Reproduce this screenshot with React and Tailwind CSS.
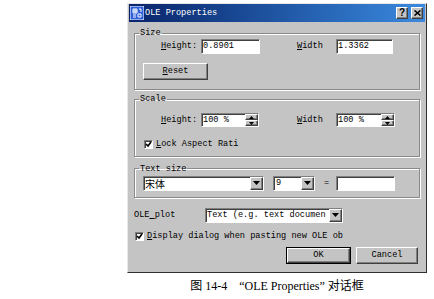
import React from "react";

const sunken =
  "border border-t-[#808080] border-l-[#808080] border-b-white border-r-white shadow-[inset_1px_1px_0_#404040] bg-white";
const raised =
  "border border-t-white border-l-white border-b-[#404040] border-r-[#404040] shadow-[inset_-1px_-1px_0_#808080] bg-[#c4c4c4]";
const group =
  "border border-[#8a8a8a] shadow-[inset_1px_1px_0_#fff,1px_1px_0_#fff] mx-[6px] w-[286px]";

const U = ({ children }) => <span className="underline underline-offset-[1px]">{children}</span>;

const Arrow = () => (
  <div className={`${raised} w-[13px] h-full flex items-center justify-center`}>
    <svg width="7" height="4" viewBox="0 0 7 4">
      <polygon points="0,0 7,0 3.5,4" fill="#000" />
    </svg>
  </div>
);

const Spin = () => (
  <div className="flex flex-col w-[13px] h-full">
    <div className={`${raised} flex-1 flex items-center justify-center`}>
      <svg width="5" height="3" viewBox="0 0 5 3">
        <polygon points="2.5,0 5,3 0,3" fill="#000" />
      </svg>
    </div>
    <div className={`${raised} flex-1 flex items-center justify-center`}>
      <svg width="5" height="3" viewBox="0 0 5 3">
        <polygon points="0,0 5,0 2.5,3" fill="#000" />
      </svg>
    </div>
  </div>
);

const Check = () => (
  <div className={`${sunken} w-[9px] h-[9px] flex items-center justify-center`}>
    <svg width="7" height="7" viewBox="0 0 7 7">
      <polyline points="1,3 3,5 6,1" fill="none" stroke="#000" strokeWidth="1.6" />
    </svg>
  </div>
);

const SpinField = ({ value, w }) => (
  <div className={`${sunken} h-[14px] flex items-stretch`} style={{ width: w }}>
    <span className="flex-1 pl-[1px] leading-[12px]">{value}</span>
    <Spin />
  </div>
);

export default function App() {
  return (
    <div className="w-[434px] h-[299px] bg-white pt-[3px] pl-[127px] font-['Liberation_Mono',monospace] text-[8.6px] text-black">
      <div className="w-[300px] h-[270px] bg-[#c4c4c4] border border-t-[#e8e8e8] border-l-[#e8e8e8] border-b-[#303030] border-r-[#303030] flex flex-col">
        <div className="mx-[1px] h-[18px] bg-gradient-to-r from-[#0a246a] to-[#3b8ae0] flex items-center pl-[1px] pr-[2px]">
          <svg width="14" height="14" viewBox="0 0 14 14">
            <rect x="0" y="0" width="14" height="14" fill="#2c5fd8" stroke="#fff" strokeWidth="1" />
            <path d="M3 3h4v4h-4zM3 5h4M5 3v4M8 8h3v3h-3zM3 9h3M3 11h3M9 3h2v3" fill="none" stroke="#fff" strokeWidth="1" />
          </svg>
          <span className="ml-[1px] text-white leading-[18px]">OLE Properties</span>
          <div className="ml-auto flex gap-[3px]">
            <div className={`${raised} w-[12px] h-[12px] flex items-center justify-center font-bold text-[10px] leading-none font-['Liberation_Sans',sans-serif]`}>?</div>
            <div className={`${raised} w-[12px] h-[12px] flex items-center justify-center`}>
              <svg width="7" height="6" viewBox="0 0 7 6">
                <path d="M0.5 0.5L6.5 5.5M6.5 0.5L0.5 5.5" stroke="#000" strokeWidth="1.6" />
              </svg>
            </div>
          </div>
        </div>

        <fieldset className={`${group} mt-[6px] pb-[9px]`}>
          <legend className="ml-[4px] px-[1px] leading-[10px]">Size</legend>
          <div className="flex items-center mt-[1px] pl-[26px]">
            <span className="w-[40px]"><U>H</U>eight:</span>
            <div className={`${sunken} w-[59px] h-[15px] pl-[1px] leading-[13px]`}>0.8901</div>
            <span className="ml-[37px] w-[39px]"><U>W</U>idth</span>
            <div className={`${sunken} w-[57px] h-[15px] pl-[1px] leading-[13px]`}>1.3362</div>
          </div>
          <div className={`${raised} ml-[8px] mt-[9px] w-[65px] h-[17px] flex items-center justify-center`}>
            <span><U>R</U>eset</span>
          </div>
        </fieldset>

        <fieldset className={`${group} mt-[4px] pb-[5px]`}>
          <legend className="ml-[4px] px-[1px] leading-[10px]">Scale</legend>
          <div className="flex items-center mt-[9px] pl-[26px]">
            <span className="w-[40px]"><U>H</U>eight:</span>
            <SpinField value="100 %" w={58} />
            <span className="ml-[38px] w-[39px]"><U>W</U>idth</span>
            <SpinField value="100 %" w={59} />
          </div>
          <div className="flex items-center mt-[11px] pl-[9px] gap-[3px]">
            <Check />
            <span><U>L</U>ock Aspect Rati</span>
          </div>
        </fieldset>

        <fieldset className={`${group} mt-[7px] pb-[6px]`}>
          <legend className="ml-[4px] px-[1px] leading-[10px]">Text size</legend>
          <div className="flex items-center mt-[2px] pl-[8px]">
            <div className={`${sunken} w-[121px] h-[15px] flex items-stretch`}>
              <span className="flex-1 pl-[1px] leading-[13px] font-['Noto_Sans_CJK_SC',sans-serif] text-[10px]">宋体</span>
              <Arrow />
            </div>
            <div className={`${sunken} ml-[9px] w-[42px] h-[15px] flex items-stretch`}>
              <span className="flex-1 pl-[2px] leading-[13px]">9</span>
              <Arrow />
            </div>
            <span className="ml-[9px] w-[12px]">=</span>
            <div className={`${sunken} w-[59px] h-[15px]`} />
          </div>
        </fieldset>

        <div className="flex items-center mt-[10px] pl-[6px]">
          <span className="w-[71px]">OLE<U> </U>plot</span>
          <div className={`${sunken} w-[138px] h-[15px] flex items-stretch`}>
            <span className="flex-1 pl-[1px] leading-[13px] whitespace-nowrap overflow-hidden">Text (e.g. text documen</span>
            <Arrow />
          </div>
        </div>

        <div className="flex items-center mt-[7px] pl-[7px] gap-[3px]">
          <Check />
          <span><U>D</U>isplay dialog when pasting new OLE ob</span>
        </div>

        <div className="flex justify-end gap-[5px] mt-[4px] pr-[8px]">
          <div className="border border-black w-[65px] h-[17px]">
            <div className={`${raised} w-full h-full flex items-center justify-center`}>OK</div>
          </div>
          <div className={`${raised} w-[62px] h-[17px] flex items-center justify-center`}>Cancel</div>
        </div>
      </div>

      <div className="w-[300px] mt-[4px] flex justify-center items-center text-[12px] font-['Liberation_Serif','Noto_Sans_CJK_SC',serif] whitespace-pre">
        <span>图 14-4    “OLE Properties” 对话框</span>
      </div>
    </div>
  );
}
